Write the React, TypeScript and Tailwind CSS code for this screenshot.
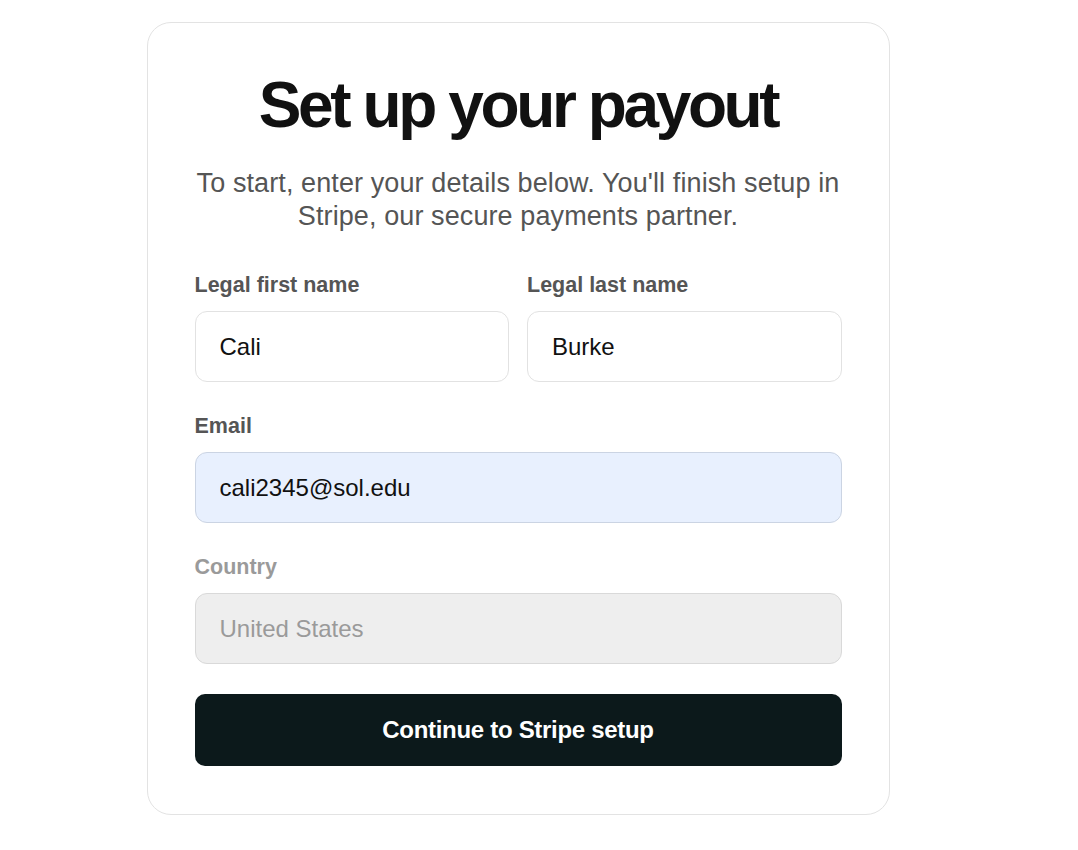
import React from "react";

function Field({
  label,
  value,
  variant = "default",
}: {
  label: string;
  value: string;
  variant?: "default" | "autofill" | "disabled";
}) {
  const labelColor = variant === "disabled" ? "text-[#9a9a9a]" : "text-[#555555]";
  const box =
    variant === "autofill"
      ? "bg-[#e8f0fe] border-[#cbd4e3] text-[#111111]"
      : variant === "disabled"
      ? "bg-[#eeeeee] border-[#d9d9d9] text-[#9a9a9a]"
      : "bg-white border-[#e2e2e2] text-[#111111]";

  return (
    <label className="flex flex-col gap-3 min-w-0">
      <span className={`text-[21.5px] leading-[28px] font-bold ${labelColor}`}>
        {label}
      </span>
      <input
        readOnly
        disabled={variant === "disabled"}
        defaultValue={value}
        className={`h-[71px] w-full rounded-[12px] border px-6 text-[24px] outline-none ${box}`}
      />
    </label>
  );
}

export default function App() {
  return (
    <div className="min-h-screen bg-white flex justify-center pr-[42px] pt-[22px] font-['Liberation_Sans',Arial,sans-serif]">
      <div className="w-[743px] h-fit rounded-[24px] border border-[#e3e3e3] bg-white px-[47px] pt-[50px] pb-[48px]">
        <h1 className="text-center text-[64px] leading-[64px] font-bold tracking-[-3.4px] text-[#111111]">
          Set up your payout
        </h1>
        <p className="mt-[30px] text-center text-[27px] leading-[33px] text-[#555555] tracking-[0.1px]">
          To start, enter your details below. You'll finish setup in
          <br />
          Stripe, our secure payments partner.
        </p>

        <div className="mt-[38px] flex flex-col gap-[30px]">
          <div className="grid grid-cols-2 gap-[18px]">
            <Field label="Legal first name" value="Cali" />
            <Field label="Legal last name" value="Burke" />
          </div>
          <Field label="Email" value="cali2345@sol.edu" variant="autofill" />
          <Field label="Country" value="United States" variant="disabled" />
          <button className="h-[72px] w-full rounded-[10px] bg-[#0c191b] text-[24px] font-bold tracking-[-0.3px] text-white">
            Continue to Stripe setup
          </button>
        </div>
      </div>
    </div>
  );
}
